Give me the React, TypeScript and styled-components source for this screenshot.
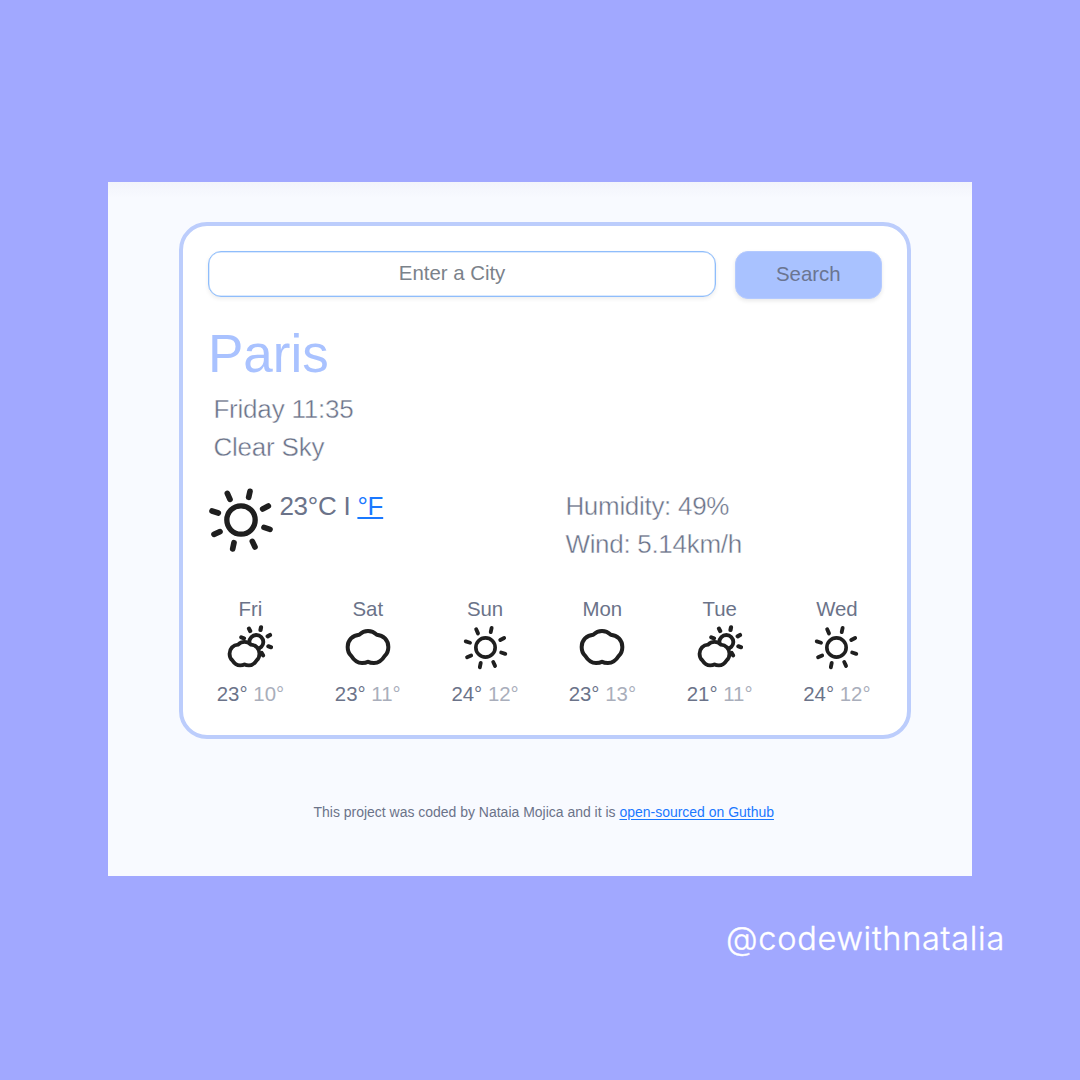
import React from "react";
import styled, { createGlobalStyle } from "styled-components";

const GlobalStyle = createGlobalStyle`
  * { box-sizing: border-box; }
  body { margin: 0; background: #a1a8ff; }
`;

const Page = styled.div`
  width: 1080px;
  height: 1080px;
  padding: 181.6px 76px 0 108px;
  background: #a1a8ff;
  font-family: "Liberation Sans", Arial, sans-serif;
  color: #6b7389;
`;

const Panel = styled.main`
  width: 864px;
  height: 694px;
  padding: 40.4px 61px 0 70.5px;
  background: linear-gradient(#f2f4fb 0, #f8faff 16px, #f8faff 100%);
`;

const Card = styled.section`
  height: 517px;
  padding: 25.5px 25.5px 0 25.5px;
  border: 4px solid #bccdfc;
  border-radius: 28px;
  background: #fff;
`;

const SearchForm = styled.form`
  display: flex;
  align-items: flex-start;
  gap: 19px;
`;

const CityInput = styled.input`
  width: 508.5px;
  height: 45.5px;
  padding: 0 20px 1px 0;
  border: 1px solid #8fbdfb;
  border-radius: 13px;
  outline: none;
  background: #fff;
  box-shadow: inset 0 0 0 0.5px #b5d4fd, 0 2px 4px rgba(0, 0, 0, 0.07);
  font: 20.4px "Liberation Sans", Arial, sans-serif;
  text-align: center;
  &::placeholder { color: #7b828a; opacity: 1; }
`;

const SearchButton = styled.button`
  width: 146.5px;
  height: 48px;
  padding: 0 0 1px;
  border: 1px solid #b4caff;
  border-radius: 13px;
  background: #a9c2ff;
  box-shadow: 0 2px 4px rgba(0, 0, 0, 0.09);
  color: #6b7591;
  font: 20.4px "Liberation Sans", Arial, sans-serif;
`;

const City = styled.h1`
  margin: 24.5px 0 0 0;
  color: #a9c2ff;
  font-size: 53px;
  font-weight: 400;
  line-height: 60px;
`;

const Lines = styled.div<{ $tracking?: number }>`
  font-size: 26px;
  line-height: 38px;
  letter-spacing: ${(p) => p.$tracking ?? 0}px;
  -webkit-text-stroke: 0.4px #fff;
`;

const Summary = styled.div`
  margin: 6px 0 0 5.4px;
`;

const Current = styled.div`
  display: grid;
  grid-template-columns: 357.4px 1fr;
  height: 107px;
  margin-top: 21px;
`;

const Now = styled.div`
  display: flex;
  gap: 5.4px;
  font-size: 26px;
  line-height: 38px;
  letter-spacing: -0.25px;
`;

const Link = styled.a`
  color: #1a78ff;
  text-decoration: underline;
  text-underline-offset: 2px;
`;

const Forecast = styled.div`
  display: grid;
  grid-template-columns: repeat(6, 117.3px);
  margin-left: -16.2px;
`;

const Day = styled.div`
  display: flex;
  flex-direction: column;
  align-items: center;
  font-size: 20.4px;
  line-height: 30px;
`;

const IconSlot = styled.div`
  display: flex;
  align-items: center;
  justify-content: center;
  height: 47px;
  margin-bottom: 8px;
`;

const Low = styled.span`
  color: #a9aebb;
`;

const Footer = styled.footer`
  margin: 63px 0 0 135px;
  font-size: 13.98px;
  line-height: 20px;
  white-space: nowrap;
`;

const Handle = styled.div`
  margin-top: 41px;
  margin-right: -1px;
  color: #fff;
  font: 300 32.5px/44px Inter, sans-serif;
  letter-spacing: 0.72px;
  text-align: right;
  -webkit-text-stroke: 0.35px #fff;
`;

const ink = {
  fill: "none",
  stroke: "#1f1f1f",
  strokeLinecap: "round",
  strokeLinejoin: "round",
} as const;

const CLOUD =
  "M0-48C-11-48-19-44-26-37C-46-36-61-20-61 0C-61 12-57 21-50 27C-42 40-32 48-18 48C-11 48-5 47 0 44C5 47 11 48 18 48C32 48 42 40 50 27C57 21 61 12 61 0C61-20 46-36 26-37C19-44 11-48 0-48Z";

function Sun({ size }: { size: number }) {
  return (
    <svg width={size} height={size} viewBox="-99 -99 198 198" {...ink}>
      <circle r="42.5" strokeWidth="16" />
      <path
        strokeWidth="17"
        d="M-87-27L-68-21M-41-80L-33-62M27-86L23-68M82-42L65-33M87 28L69 22M42 81L34 64M-25 87L-21 68M-81 43L-63 35"
      />
    </svg>
  );
}

function Cloud() {
  return (
    <svg width="46" height="38" viewBox="-69 -57 138 114" {...ink}>
      <path d={CLOUD} strokeWidth="12" />
    </svg>
  );
}

function PartlyCloudy() {
  return (
    <svg width="46" height="44" viewBox="82 104 138 132" {...ink}>
      <circle cx="170" cy="155" r="21" strokeWidth="11.5" />
      <path
        strokeWidth="12.5"
        d="M148 115L151.500 122M184 111L182.500 119M204 138L211 134M206 168L214 170.500M186 188L190 195M125 141L133 144"
      />
      <path
        d={CLOUD}
        fill="#fff"
        strokeWidth="15.5"
        transform="translate(134.500 190) scale(.735)"
      />
    </svg>
  );
}

const days = [
  { name: "Fri", icon: "partly", high: 23, low: 10 },
  { name: "Sat", icon: "cloud", high: 23, low: 11 },
  { name: "Sun", icon: "sun", high: 24, low: 12 },
  { name: "Mon", icon: "cloud", high: 23, low: 13 },
  { name: "Tue", icon: "partly", high: 21, low: 11 },
  { name: "Wed", icon: "sun", high: 24, low: 12 },
];

function WeatherIcon({ kind }: { kind: string }) {
  if (kind === "sun") return <Sun size={45} />;
  if (kind === "cloud") return <Cloud />;
  return <PartlyCloudy />;
}

export default function App() {
  return (
    <>
      <GlobalStyle />
      <Page>
        <Panel>
          <Card>
            <SearchForm onSubmit={(e) => e.preventDefault()}>
              <CityInput placeholder="Enter a City" />
              <SearchButton type="submit">Search</SearchButton>
            </SearchForm>
            <City>Paris</City>
            <Summary>
              <Lines $tracking={-0.2}>
                Friday 11:35
                <br />
                Clear Sky
              </Lines>
            </Summary>
            <Current>
              <Now>
                <Sun size={66} />
                <span>
                  23°C I <Link href="#">°F</Link>
                </span>
              </Now>
              <Lines $tracking={-0.3}>
                Humidity: 49%
                <br />
                Wind: 5.14km/h
              </Lines>
            </Current>
            <Forecast>
              {days.map((d) => (
                <Day key={d.name}>
                  <span>{d.name}</span>
                  <IconSlot>
                    <WeatherIcon kind={d.icon} />
                  </IconSlot>
                  <span>
                    {d.high}° <Low>{d.low}°</Low>
                  </span>
                </Day>
              ))}
            </Forecast>
          </Card>
          <Footer>
            This project was coded by Nataia Mojica and it is{" "}
            <Link href="#">open-sourced on Guthub</Link>
          </Footer>
        </Panel>
        <Handle>@codewithnatalia</Handle>
      </Page>
    </>
  );
}
